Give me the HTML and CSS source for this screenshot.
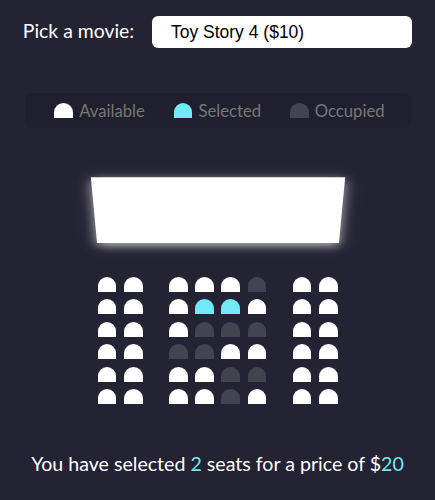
FILE: index.html
```html
<!DOCTYPE html>
<html lang="en">
<head>
<meta charset="UTF-8">
<title>Movie Seat Booking</title>
<link rel="stylesheet" href="styles.css">
</head>
<body>
  <div class="movie-container">
    <label class="movie-label">Pick a movie:</label>
    <select class="movie-select">
      <option value="10">Toy Story 4 ($10)</option>
    </select>
  </div>

  <ul class="showcase">
    <li class="showcase-item"><div class="seat"></div><small class="showcase-label">Available</small></li>
    <li class="showcase-item"><div class="seat selected"></div><small class="showcase-label">Selected</small></li>
    <li class="showcase-item"><div class="seat occupied"></div><small class="showcase-label">Occupied</small></li>
  </ul>

  <div class="container">
    <div class="screen"></div>
    <div class="row">
      <div class="seat"></div><div class="seat"></div>
      <div class="seat"></div><div class="seat"></div><div class="seat"></div><div class="seat occupied"></div>
      <div class="seat"></div><div class="seat"></div>
    </div>
    <div class="row">
      <div class="seat"></div><div class="seat"></div>
      <div class="seat"></div><div class="seat selected"></div><div class="seat selected"></div><div class="seat"></div>
      <div class="seat"></div><div class="seat"></div>
    </div>
    <div class="row">
      <div class="seat"></div><div class="seat"></div>
      <div class="seat"></div><div class="seat occupied"></div><div class="seat occupied"></div><div class="seat occupied"></div>
      <div class="seat"></div><div class="seat"></div>
    </div>
    <div class="row">
      <div class="seat"></div><div class="seat"></div>
      <div class="seat occupied"></div><div class="seat occupied"></div><div class="seat"></div><div class="seat"></div>
      <div class="seat"></div><div class="seat"></div>
    </div>
    <div class="row">
      <div class="seat"></div><div class="seat"></div>
      <div class="seat"></div><div class="seat"></div><div class="seat occupied"></div><div class="seat occupied"></div>
      <div class="seat"></div><div class="seat"></div>
    </div>
    <div class="row">
      <div class="seat"></div><div class="seat"></div>
      <div class="seat"></div><div class="seat"></div><div class="seat occupied"></div><div class="seat"></div>
      <div class="seat"></div><div class="seat"></div>
    </div>
  </div>

  <p class="text">You have selected <span class="count">2</span> seats for a price of $<span class="total">20</span></p>
</body>
</html>
```

FILE: styles.css
```css
* {
  box-sizing: border-box;
}

html, body {
  margin: 0;
}

body {
  background-color: #242333;
  color: #fff;
  font-family: "Lato", "Noto Sans", sans-serif;
  display: flex;
  flex-direction: column;
  align-items: center;
  padding-top: 16px;
  height: 500px;
  overflow: hidden;
}

.movie-container {
  display: flex;
  align-items: baseline;
  font-size: 19.4px;
}

.movie-select {
  background-color: #fff;
  color: #000;
  border: 0;
  border-radius: 6.25px;
  font-family: "Liberation Sans", Arial, sans-serif;
  font-size: 17.5px;
  margin-left: 18px;
  padding: 0 18.75px;
  width: 260px;
  height: 32px;
  -webkit-appearance: none;
  appearance: none;
}

.showcase {
  margin: 45px 0 0;
  width: 386px;
  height: 35px;
  padding: 0;
  list-style: none;
  background: rgba(0, 0, 0, 0.1);
  border-radius: 6.25px;
  color: #777;
  display: flex;
  justify-content: center;
  align-items: center;
  gap: 25px;
}

.showcase-item {
  display: flex;
  align-items: center;
}

.showcase-label {
  font-size: 16.67px;
  margin-left: 2.5px;
}

.seat {
  background-color: #fff;
  width: 18.75px;
  height: 15px;
  margin: 3.75px;
  border-top-left-radius: 12.5px;
  border-top-right-radius: 12.5px;
}

.seat.selected {
  background-color: #6feaf6;
}

.seat.occupied {
  background-color: #444451;
}

.container {
  margin-top: 20px;
  perspective: 1250px;
}

.screen {
  background-color: #fff;
  height: 87.5px;
  width: 100%;
  margin: 18.75px 0;
  transform: rotateX(-45deg);
  box-shadow: 0 3.75px 12.5px rgba(255, 255, 255, 0.7);
}

.row {
  display: flex;
}

.row .seat:nth-child(2) {
  margin-right: 22.5px;
}

.row .seat:nth-last-child(2) {
  margin-left: 22.5px;
}

.text {
  margin: 44px 0 0;
  font-size: 19.6px;
  line-height: 24px;
}

.text .count,
.text .total {
  color: #6feaf6;
}
```
